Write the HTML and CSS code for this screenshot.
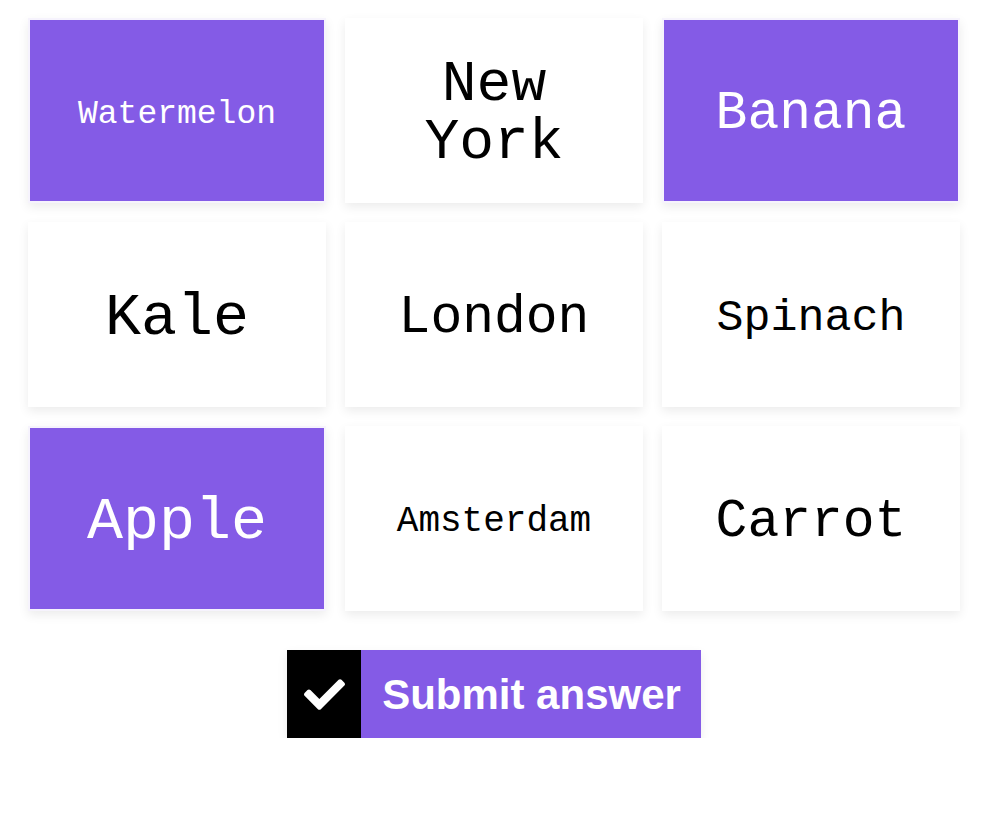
FILE: index.html
```html
<!DOCTYPE html>
<html lang="en">
<head>
    <meta charset="UTF-8">
    <meta name="viewport" content="width=device-width, initial-scale=1.0">
    <title>Pick the odd ones</title>
    <link rel="stylesheet" href="styles.css">
</head>
<body>
    <div class="quiz">
        <div class="board">
            <button class="tile selected" style="font-size: 33px">Watermelon</button>
            <button class="tile" style="font-size: 58px">New York</button>
            <button class="tile selected" style="font-size: 53px">Banana</button>
            <button class="tile" style="font-size: 60px">Kale</button>
            <button class="tile" style="font-size: 53px">London</button>
            <button class="tile" style="font-size: 45px">Spinach</button>
            <button class="tile selected" style="font-size: 60px">Apple</button>
            <button class="tile" style="font-size: 36px">Amsterdam</button>
            <button class="tile" style="font-size: 53px">Carrot</button>
        </div>

        <div class="actions">
            <button class="submit">
                <span class="submit-icon">
                    <svg viewBox="0 64 512 384" width="41" height="31">
                        <path fill="#fff" d="M173.9 439.4l-166.4-166.4c-10-10-10-26.2 0-36.2l36.2-36.2c10-10 26.2-10 36.2 0L192 312.7 432.1 72.6c10-10 26.2-10 36.2 0l36.2 36.2c10 10 10 26.2 0 36.2l-294.4 294.4c-10 10-26.2 10-36.2 0z"/>
                    </svg>
                </span>
                <span class="submit-label">Submit answer</span>
            </button>
        </div>
    </div>
</body>
</html>
```

FILE: styles.css
```css
body {
    margin: 0;
    background: #fff;
    font-family: 'Liberation Mono', 'Courier New', monospace;
}
.quiz {
    width: 932px;
    padding: 18px 0 0 28px;
}
.board {
    display: grid;
    grid-template-columns: repeat(3, 298px);
    grid-auto-rows: 185px;
    gap: 19px;
}
.tile {
    display: flex;
    align-items: center;
    justify-content: center;
    padding: 7px 40px 0;
    margin: 0;
    background: #fff;
    color: #000;
    border: 2px solid #fff;
    font-family: inherit;
    line-height: 1;
    text-align: center;
    box-shadow: 0 4px 10px rgba(0, 0, 0, 0.08);
    cursor: pointer;
}
.tile.selected {
    background: #845be6;
    color: #fff;
    border-color: #f6f3fd;
}
.actions {
    display: flex;
    justify-content: center;
    margin-top: 39px;
}
.submit {
    display: flex;
    height: 88px;
    padding: 0;
    border: none;
    background: #845be6;
    box-shadow: 0 4px 10px rgba(0, 0, 0, 0.08);
    cursor: pointer;
}
.submit-icon {
    display: flex;
    align-items: center;
    justify-content: center;
    width: 74px;
    background: #000;
}
.submit-label {
    display: flex;
    align-items: center;
    padding: 2px 20px 0 21px;
    color: #fff;
    font-family: 'Liberation Sans', Arial, sans-serif;
    font-weight: bold;
    font-size: 42px;
}
```
